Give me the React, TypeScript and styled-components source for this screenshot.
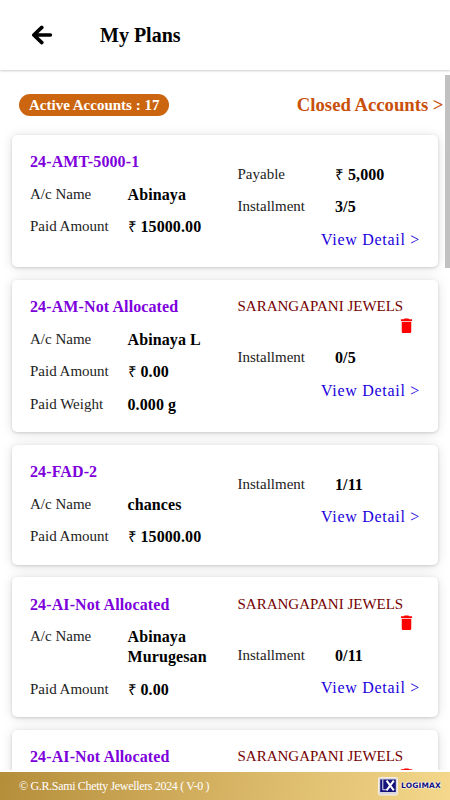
import React from 'react';
import styled, { createGlobalStyle } from 'styled-components';

const Global = createGlobalStyle`
  * { box-sizing: border-box; }
  body {
    margin: 0;
    background: #fff;
    font-family: "Liberation Serif", "Times New Roman", serif;
    color: #000;
    overflow: hidden;
  }
`;

const Screen = styled.div`
  display: flex;
  flex-direction: column;
  height: 800px;
  width: 450px;
`;

const Header = styled.header`
  display: flex;
  align-items: center;
  flex: 0 0 70px;
  padding-left: 31px;
  box-shadow: 0 1px 2px rgba(0, 0, 0, 0.2);
`;

const BackButton = styled.button`
  display: flex;
  width: 22px;
  height: 20px;
  padding: 0;
  border: 0;
  background: none;
`;

const Heading = styled.h1`
  margin: 0 0 0 47px;
  font-size: 20px;
  line-height: 24px;
`;

const Body = styled.main`
  display: flex;
  flex: 0 0 695px;
  margin-top: 5px;
  overflow: hidden;
`;

const Content = styled.div`
  flex: 1;
  min-width: 0;
`;

const ScrollTrack = styled.div`
  width: 5px;
`;

const ScrollThumb = styled.div`
  height: 192.5px;
  background: #c1c1c1;
`;

const Summary = styled.div`
  display: flex;
  align-items: center;
  justify-content: space-between;
  height: 60px;
  padding: 0 1.5px 0 19px;
`;

const ActiveBadge = styled.span`
  height: 22px;
  padding: 0 10px;
  border-radius: 11px;
  background: #cc6510;
  color: #fff;
  font-size: 15px;
  font-weight: bold;
  line-height: 22px;
`;

const ClosedLink = styled.a`
  color: #c9500a;
  font-size: 18.7px;
  font-weight: bold;
  line-height: 22px;
`;

const Cards = styled.div`
  display: flex;
  flex-direction: column;
  gap: 12.5px;
  padding: 0 7px 0 12px;
`;

const Card = styled.article`
  display: grid;
  grid-template-columns: 207.5px 1fr;
  padding: 17.1px 18px 17.9px 18px;
  border-radius: 5px;
  background: #fff;
  box-shadow: 0 1px 3px rgba(0, 0, 0, 0.14), 0 1px 12px rgba(0, 0, 0, 0.13);
`;

const Column = styled.div<{ $offset?: boolean }>`
  display: flex;
  flex-direction: column;
  gap: 12.5px;
  padding-top: ${(p) => (p.$offset ? '12.5px' : '0')};
`;

const PlanName = styled.h2`
  margin: 0;
  color: #7d00dc;
  font-size: 16px;
  line-height: 20px;
  letter-spacing: 0.11px;
`;

const Row = styled.div`
  display: grid;
  grid-template-columns: 97.5px 1fr;
`;

const Label = styled.span`
  font-size: 15px;
  line-height: 18px;
  color: #222;
`;

const Value = styled.span`
  max-width: 90px;
  font-size: 16px;
  font-weight: bold;
  line-height: 20px;
  letter-spacing: 0.1px;
`;

const Rupee = styled.span`
  font-weight: normal;
  font-size: 15px;
`;

const BranchBlock = styled.div`
  height: 38.5px;
`;

const Branch = styled.div`
  color: #750000;
  font-size: 15px;
  line-height: 18px;
`;

const DeleteButton = styled.button`
  display: flex;
  margin: 0.6px 4px 0 auto;
  padding: 0;
  border: 0;
  background: none;
`;

const DetailLink = styled.a`
  align-self: flex-end;
  color: #2000dc;
  font-size: 16px;
  line-height: 20px;
  letter-spacing: 0.7px;
  white-space: nowrap;
`;

const Footer = styled.footer`
  display: flex;
  align-items: center;
  justify-content: space-between;
  flex: 0 0 28px;
  margin-top: 2px;
  padding: 0 7px 0 19px;
  background: linear-gradient(100deg, #b58e3a, #f5d88c);
`;

const Copyright = styled.span`
  color: #fff;
  font-size: 12px;
  line-height: 14px;
  letter-spacing: -0.33px;
`;

const Brand = styled.div`
  display: flex;
  align-items: center;
`;

const BrandName = styled.span`
  margin-left: 3px;
  width: 42px;
  color: #14107c;
  font: bold 7.5px/10px "DejaVu Sans", sans-serif;
  letter-spacing: 0.15px;
  text-shadow: 0 0 1px #fff, 0 0 2px #fff, 0 0 2px #fff;
`;

type Field = { label: string; value: string; money?: boolean };
type Plan = { name: string; left: Field[]; right: Field[]; branch?: string };

const account = (value: string): Field => ({ label: 'A/c Name', value });
const paid = (value: string): Field => ({ label: 'Paid Amount', value, money: true });
const installment = (value: string): Field => ({ label: 'Installment', value });

const plans: Plan[] = [
  {
    name: '24-AMT-5000-1',
    left: [account('Abinaya'), paid('15000.00')],
    right: [{ label: 'Payable', value: '5,000', money: true }, installment('3/5')],
  },
  {
    name: '24-AM-Not Allocated',
    left: [account('Abinaya L'), paid('0.00'), { label: 'Paid Weight', value: '0.000 g' }],
    right: [installment('0/5')],
    branch: 'SARANGAPANI JEWELS',
  },
  {
    name: '24-FAD-2',
    left: [account('chances'), paid('15000.00')],
    right: [installment('1/11')],
  },
  {
    name: '24-AI-Not Allocated',
    left: [account('Abinaya Murugesan'), paid('0.00')],
    right: [installment('0/11')],
    branch: 'SARANGAPANI JEWELS',
  },
  {
    name: '24-AI-Not Allocated',
    left: [],
    right: [],
    branch: 'SARANGAPANI JEWELS',
  },
];

const FieldRow = ({ field }: { field: Field }) => (
  <Row>
    <Label>{field.label}</Label>
    <Value>
      {field.money && <Rupee>₹ </Rupee>}
      {field.value}
    </Value>
  </Row>
);

const TrashIcon = () => (
  <svg width="19" height="19.5" viewBox="0 0 24 24" preserveAspectRatio="none" fill="#f00">
    <path d="M6 19c0 1.1.9 2 2 2h8c1.1 0 2-.9 2-2V7H6v12zM19 4h-3.5l-1-1h-5l-1 1H5v2h14V4z" />
  </svg>
);

const PlanCard = ({ plan }: { plan: Plan }) => (
  <Card>
    <Column>
      <PlanName>{plan.name}</PlanName>
      {plan.left.map((f) => (
        <FieldRow key={f.label} field={f} />
      ))}
    </Column>
    <Column $offset={!plan.branch}>
      {plan.branch && (
        <BranchBlock>
          <Branch>{plan.branch}</Branch>
          <DeleteButton aria-label="Delete">
            <TrashIcon />
          </DeleteButton>
        </BranchBlock>
      )}
      {plan.right.map((f) => (
        <FieldRow key={f.label} field={f} />
      ))}
      {plan.right.length > 0 && <DetailLink>View Detail &gt;</DetailLink>}
    </Column>
  </Card>
);

const BrandMark = () => (
  <svg width="20" height="19" viewBox="0 0 20 19">
    <rect x="0.5" y="0.5" width="19" height="17.5" rx="1.5" fill="#d9d6dc" stroke="#f3efe9" />
    <rect x="2.2" y="2.5" width="15.6" height="12.5" fill="#14107c" />
    <path d="M4.8 2.5V12.8H9" fill="none" stroke="#e8e6f0" strokeWidth="1" />
    <path d="M8.6 3.6L15.8 13.4M15.8 3.6L8.6 13.4" fill="none" stroke="#fff" strokeWidth="2" />
  </svg>
);

export default function App() {
  return (
    <Screen>
      <Global />
      <Header>
        <BackButton aria-label="Back">
          <svg width="22" height="20" viewBox="0 0 22 20">
            <path
              d="M19.4 10H3M10.8 2.4L2.8 10L10.8 17.6"
              fill="none"
              stroke="#000"
              strokeWidth="3.6"
              strokeLinecap="round"
              strokeLinejoin="round"
            />
          </svg>
        </BackButton>
        <Heading>My Plans</Heading>
      </Header>
      <Body>
        <Content>
          <Summary>
            <ActiveBadge>Active Accounts : 17</ActiveBadge>
            <ClosedLink>Closed Accounts &gt;</ClosedLink>
          </Summary>
          <Cards>
            {plans.map((plan, i) => (
              <PlanCard key={i} plan={plan} />
            ))}
          </Cards>
        </Content>
        <ScrollTrack>
          <ScrollThumb />
        </ScrollTrack>
      </Body>
      <Footer>
        <Copyright>© G.R.Sami Chetty Jewellers 2024 ( V-0 )</Copyright>
        <Brand>
          <BrandMark />
          <BrandName>LOGIMAX</BrandName>
        </Brand>
      </Footer>
    </Screen>
  );
}
